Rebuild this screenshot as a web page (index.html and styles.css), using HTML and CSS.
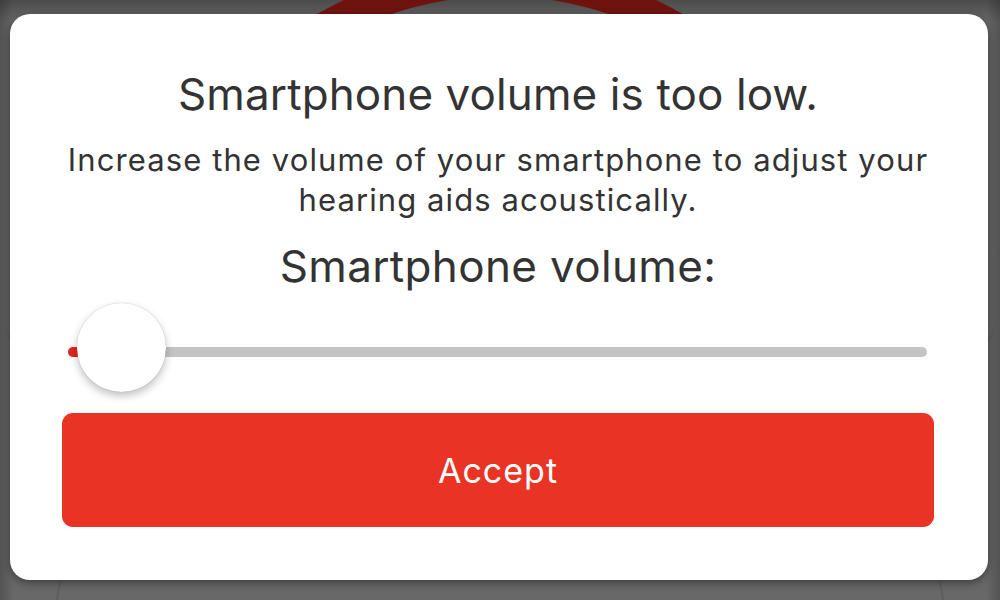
FILE: index.html
```html
<!DOCTYPE html>
<html lang="en">
<head>
<meta charset="utf-8">
<title>Smartphone volume</title>
<link rel="stylesheet" href="styles.css">
</head>
<body>
<div class="backdrop">
  <div class="ring"></div>
  <div class="arc arc-left"></div>
  <div class="arc arc-right"></div>
</div>
<main class="dialog">
  <h1 class="title">Smartphone volume is too low.</h1>
  <p class="message">Increase the volume of your smartphone to adjust your hearing aids acoustically.</p>
  <h2 class="label">Smartphone volume:</h2>
  <div class="slider">
    <div class="track"><div class="fill"></div></div>
    <div class="thumb"></div>
  </div>
  <button class="accept" type="button">Accept</button>
</main>
</body>
</html>
```
FILE: styles.css
```css
html, body {
  margin: 0;
  padding: 0;
}
body {
  width: 1000px;
  height: 600px;
  overflow: hidden;
  position: relative;
  background:
    linear-gradient(to bottom, rgba(0,0,0,0.28) 0px, rgba(0,0,0,0) 22px),
    linear-gradient(to right, rgba(0,0,0,0.2) 0px, rgba(0,0,0,0) 14px, rgba(0,0,0,0) 986px, rgba(0,0,0,0.2) 1000px),
    #686868;
  font-family: "Inter", "Roboto", "Liberation Sans", sans-serif;
  padding-top: 14px;
  box-sizing: border-box;
}
.backdrop {
  position: absolute;
  inset: 0;
  overflow: hidden;
}
.ring {
  position: absolute;
  left: 135px;
  top: -35px;
  width: 730px;
  height: 730px;
  border-radius: 50%;
  border: 31px solid #720c08;
  box-sizing: border-box;
  clip-path: inset(0 0 85% 0);
  opacity: 0.9;
}
.arc {
  position: absolute;
  width: 760px;
  height: 760px;
  border-radius: 50%;
  border: 2px solid rgba(90,90,90,0.7);
  top: 150px;
}
.arc-left { left: -700px; }
.arc-right { right: -700px; }
.dialog {
  position: relative;
  margin: 0 12px 0 10px;
  height: 566px;
  background: #ffffff;
  border-radius: 20px;
  box-shadow: 0 3px 8px rgba(0,0,0,0.4);
  box-sizing: border-box;
  padding: 56px 54px 0 52px;
  display: flex;
  flex-direction: column;
  align-items: stretch;
  color: #333333;
  text-align: center;
}
.title {
  margin: 0;
  font-size: 44px;
  font-weight: 400;
  line-height: 48px;
  letter-spacing: 0.1px;
}
.message {
  margin: 22px 0 0 0;
  font-size: 31px;
  line-height: 40px;
  font-weight: 400;
  letter-spacing: 1.1px;
}
.label {
  margin: 22px 0 0 0;
  font-size: 44px;
  font-weight: 400;
  line-height: 48px;
  letter-spacing: 0.35px;
}
.slider {
  position: relative;
  height: 89px;
  margin: 13px 0 0 0;
  display: flex;
  align-items: center;
}
.track {
  flex: 1;
  height: 10px;
  margin: 9px 7px 0 6px;
  background: #c4c4c4;
  border-radius: 5px;
  overflow: hidden;
}
.fill {
  width: 16px;
  height: 100%;
  background: #e0271f;
}
.thumb {
  position: absolute;
  left: 15px;
  top: 0;
  width: 89px;
  height: 89px;
  border-radius: 50%;
  background: #ffffff;
  box-shadow: 0 4px 8px rgba(0,0,0,0.25), 0 0 1px rgba(0,0,0,0.25);
}
.accept {
  margin: 21px 0 0 0;
  height: 114px;
  border: none;
  border-radius: 11px;
  background: #e93325;
  color: #ffffff;
  font-family: inherit;
  font-size: 34px;
  font-weight: 400;
  letter-spacing: 1px;
  cursor: pointer;
}
```
